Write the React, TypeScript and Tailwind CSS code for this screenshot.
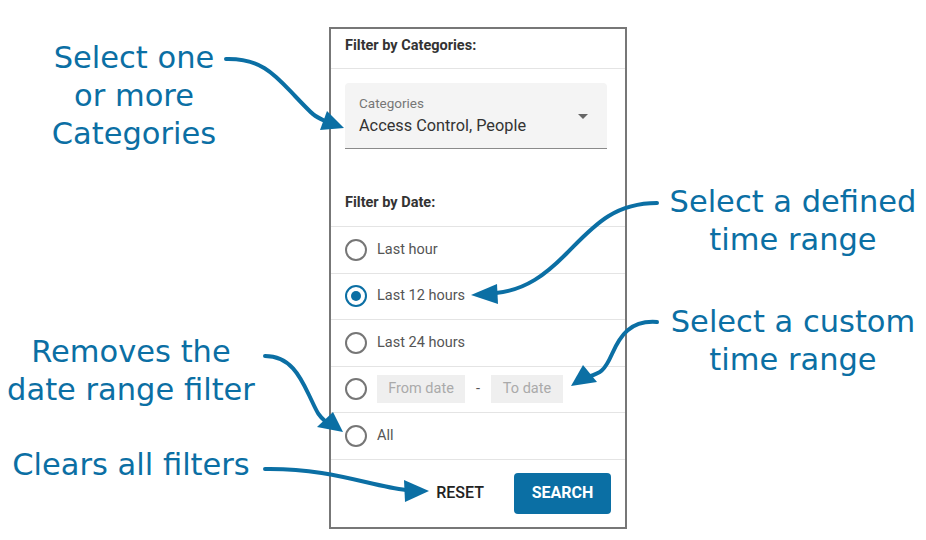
import React from 'react';

const BLUE = '#0b6fa4';

function Radio({ checked }: { checked?: boolean }) {
  return (
    <span
      className={`flex h-[22px] w-[22px] shrink-0 items-center justify-center rounded-full border-2 ${
        checked ? 'border-[#0b6fa4]' : 'border-[#767676]'
      }`}
    >
      {checked && <span className="h-[10px] w-[10px] rounded-full bg-[#0b6fa4]" />}
    </span>
  );
}

function Row({ children, checked }: { children: React.ReactNode; checked?: boolean }) {
  return (
    <div className="flex h-[46.5px] shrink-0 items-center gap-[10px] border-b border-[#e4e4e4] pl-[14px]">
      <Radio checked={checked} />
      {children}
    </div>
  );
}

function Callout({ lines, className }: { lines: string[]; className: string }) {
  return (
    <div className={`absolute text-center text-[30.5px] leading-[38px] text-[#0b6fa4] ${className}`} style={{ fontFamily: '"DejaVu Sans", sans-serif' }}>
      {lines.map(l => (
        <div key={l} className="whitespace-nowrap">{l}</div>
      ))}
    </div>
  );
}

export default function App() {
  return (
    <div className="relative h-[540px] w-[926px] overflow-hidden bg-white" style={{ fontFamily: 'Roboto, "Liberation Sans", sans-serif' }}>
      <div className="pl-[329px] pt-[27px]">
        <div className="flex h-[502px] w-[298px] flex-col border-2 border-[#777] bg-white">
          <div className="flex h-[40px] shrink-0 items-center border-b border-[#e4e4e4] px-[14px] pb-[5px] text-[14.5px] leading-[16px] font-bold text-[#333]">
            Filter by Categories:
          </div>
          <div className="shrink-0 px-[14px] pt-[14px]">
            <div className="relative h-[66px] w-[262px] rounded-t-[4px] border-b border-[#8a8a8a] bg-[#f4f4f4] px-[14px] pt-[12px]">
              <div className="text-[13.5px] leading-[16px] text-[#777]">Categories</div>
              <div className="mt-[5px] text-[16.3px] leading-[20px] text-[#333]">Access Control, People</div>
              <span className="absolute right-[19px] top-[31px] h-0 w-0 border-x-[5px] border-t-[5px] border-x-transparent border-t-[#666]" />
            </div>
          </div>
          <div className="flex h-[78px] shrink-0 items-end border-b border-[#e4e4e4] px-[14px] pb-[15px] text-[14.5px] leading-[16px] font-bold text-[#333]">
            Filter by Date:
          </div>
          <Row>
            <span className="text-[14.5px] text-[#555]">Last hour</span>
          </Row>
          <Row checked>
            <span className="text-[14.5px] text-[#555]">Last 12 hours</span>
          </Row>
          <Row>
            <span className="text-[14.5px] text-[#555]">Last 24 hours</span>
          </Row>
          <Row>
            <span className="flex h-[28px] w-[88px] items-center justify-center bg-[#efefef] text-[14.5px] text-[#aaa]">From date</span>
            <span className="w-[6px] text-center text-[14.5px] text-[#555]">-</span>
            <span className="flex h-[28px] w-[72px] items-center justify-center bg-[#efefef] text-[14.5px] text-[#aaa]">To date</span>
          </Row>
          <Row>
            <span className="text-[14.5px] text-[#555]">All</span>
          </Row>
          <div className="flex flex-1 items-center justify-end gap-[30px] pr-[14px]">
            <button className="text-[16px] font-medium text-[#222]">RESET</button>
            <button className="h-[41px] w-[97px] rounded-[4px] bg-[#0b6fa4] text-[16px] font-bold text-white">SEARCH</button>
          </div>
        </div>
      </div>

      <Callout lines={['Select one', 'or more', 'Categories']} className="left-[34px] top-[39px] w-[200px]" />
      <Callout lines={['Select a defined', 'time range']} className="left-[663px] top-[183px] w-[260px]" />
      <Callout lines={['Select a custom', 'time range']} className="left-[663px] top-[303px] w-[260px]" />
      <Callout lines={['Removes the', 'date range filter']} className="left-[1px] top-[333px] w-[260px]" />
      <Callout lines={['Clears all filters']} className="left-[1px] top-[446px] w-[260px]" />

      <svg className="pointer-events-none absolute left-0 top-0" width="926" height="540" viewBox="0 0 926 540">
        <g fill="none" stroke={BLUE} strokeWidth="4" strokeLinecap="round">
          <path d="M226 59 C 262 58, 276 76, 295 96 S 314 116, 325 121" />
          <path d="M657 203 C 612 203, 592 228, 566 254 C 546 274, 526 290, 496 293" />
          <path d="M657 322 C 630 320, 620 336, 612 354 S 600 373, 588 377" />
          <path d="M265 356 C 290 356, 300 376, 309 395 S 318 415, 326 422" />
          <path d="M265 469 C 330 468, 370 486, 406 490" />
        </g>
        <g fill={BLUE}>
          <polygon points="344,128 320,130 327,111" />
          <polygon points="471,295 497,284 498,304" />
          <polygon points="571,386 583,365 597,382" />
          <polygon points="343,432 317,427 333,412" />
          <polygon points="429,491 404,480 405,502" />
        </g>
      </svg>
    </div>
  );
}
